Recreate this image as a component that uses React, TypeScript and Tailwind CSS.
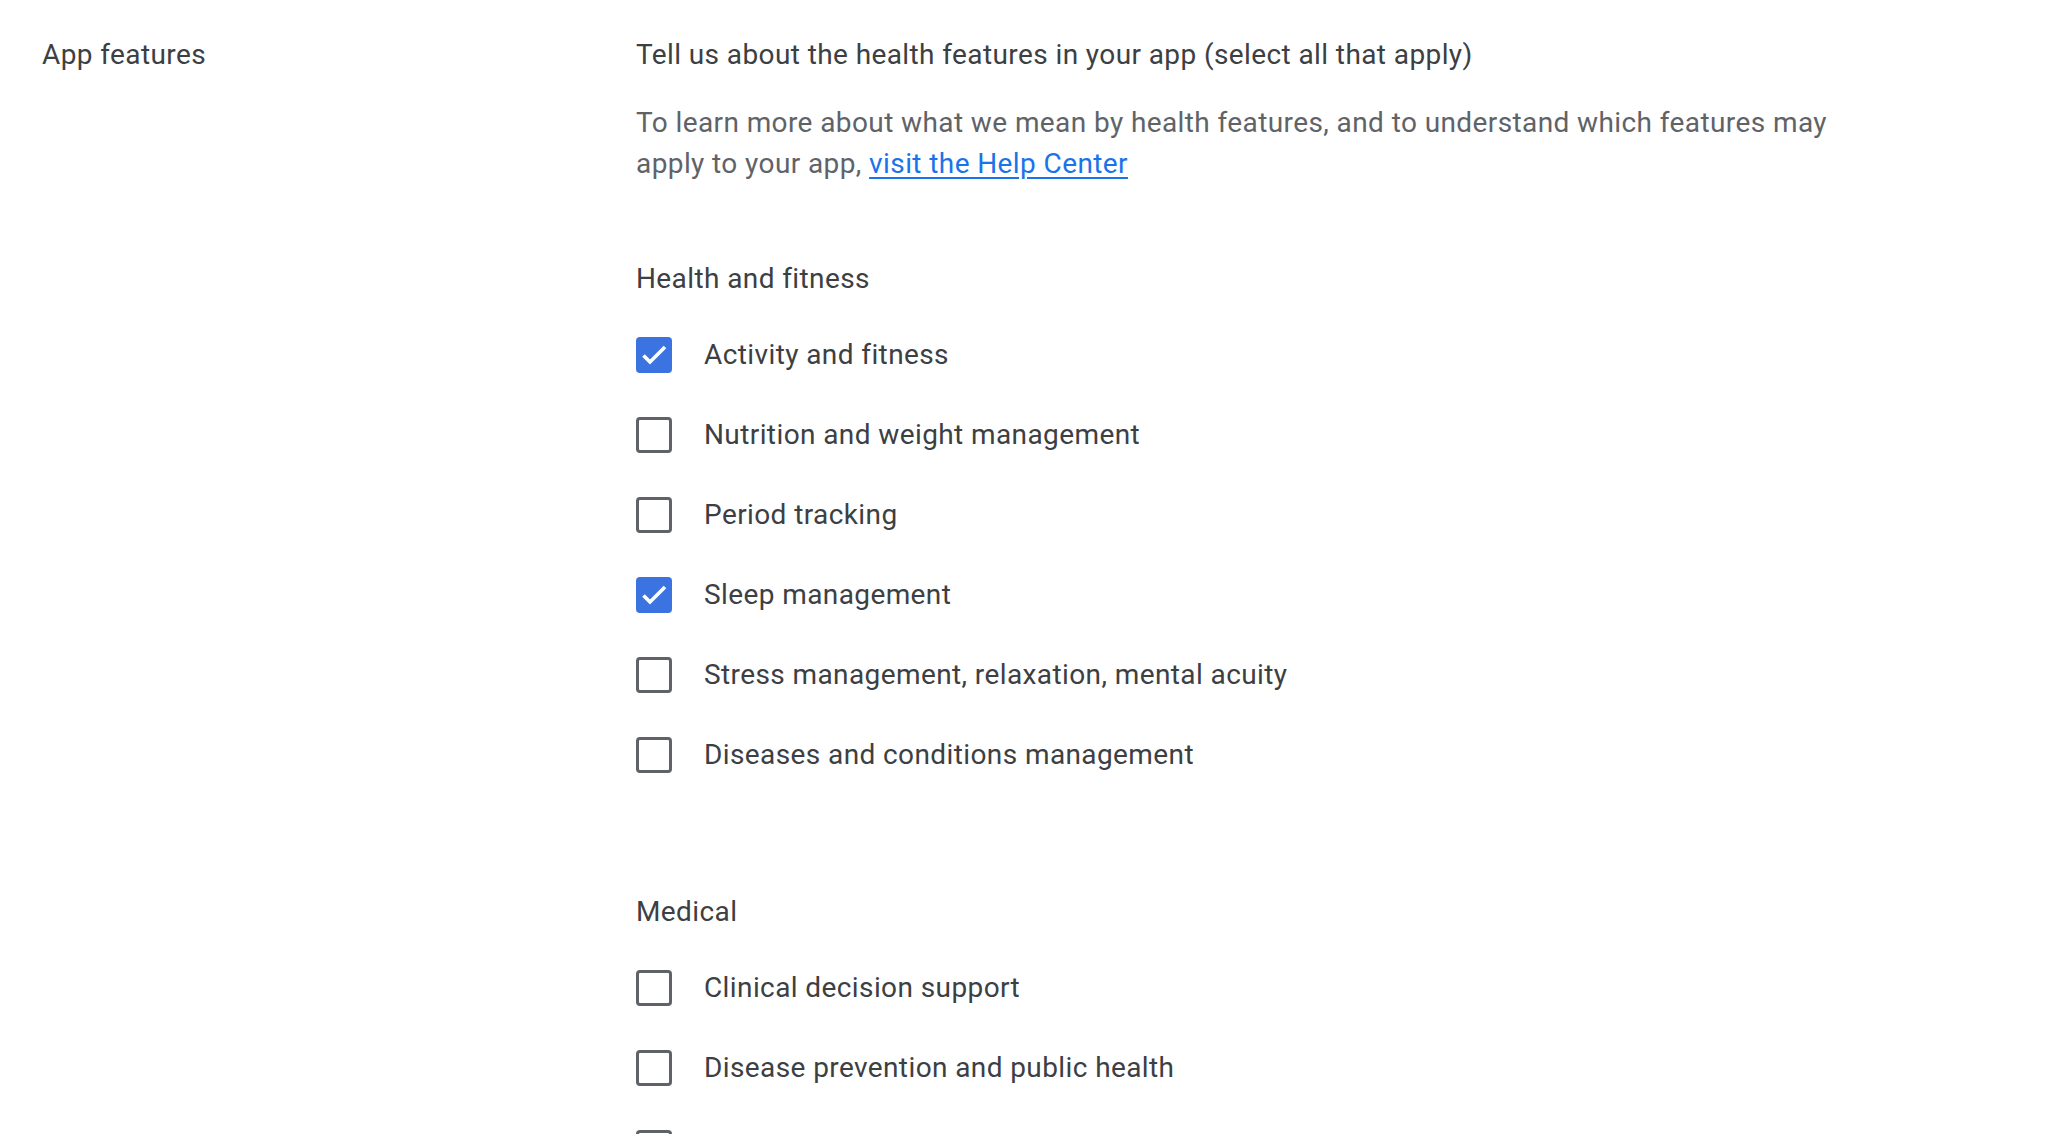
const healthItems = [
    { label: "Activity and fitness", checked: true },
    { label: "Nutrition and weight management", checked: false },
    { label: "Period tracking", checked: false },
    { label: "Sleep management", checked: true },
    { label: "Stress management, relaxation, mental acuity", checked: false },
    { label: "Diseases and conditions management", checked: false }
];

const medicalItems = [
    { label: "Clinical decision support", checked: false },
    { label: "Disease prevention and public health", checked: false },
    { label: "Emergency treatment", checked: false }
];

export default function App() {
    return (
        <div className="h-screen overflow-hidden bg-white font-['Roboto',sans-serif] text-[28px] leading-[40px] tracking-[0.4px] text-[#3c4043]">
            <div className="flex pt-[35px]">
                <div className="w-[636px] shrink-0 pl-[42px]">App features</div>
                <div className="max-w-[1200px] flex-1">
                    <p>Tell us about the health features in your app (select all that apply)</p>
                    <p className="mt-[27px] leading-[41px] text-[#5f6368]">
                        To learn more about what we mean by health features, and to understand which features may apply to your app,{" "}
                        <a href="#" className="text-[#1a73e8] underline underline-offset-[4px]">
                            visit the Help Center
                        </a>
                    </p>

                    <Section title="Health and fitness" items={healthItems} className="mt-[75px]" />
                    <Section title="Medical" items={medicalItems} className="mt-[97px]" />
                </div>
            </div>
        </div>
    );
}

function Section({ title, items, className }: { title: string; items: { label: string; checked: boolean }[]; className: string }) {
    return (
        <section className={className}>
            <h3>{title}</h3>
            <div className="mt-4">
                {items.map((item) => (
                    <label key={item.label} className="flex h-20 items-center gap-8">
                        <Checkbox checked={item.checked} />
                        <span>{item.label}</span>
                    </label>
                ))}
            </div>
        </section>
    );
}

function Checkbox({ checked }: { checked: boolean }) {
    if (checked) {
        return (
            <span className="flex h-9 w-9 shrink-0 items-center justify-center rounded-[4px] bg-[#3b73e0]">
                <svg width="36" height="36" viewBox="0 0 36 36" aria-hidden="true">
                    <path d="M7.5 18.5 L14 25 L29 10" fill="none" stroke="white" strokeWidth="3.6" />
                </svg>
            </span>
        );
    }
    return <span className="h-9 w-9 shrink-0 rounded-[4px] border-[3.5px] border-[#5f6368]" />;
}
